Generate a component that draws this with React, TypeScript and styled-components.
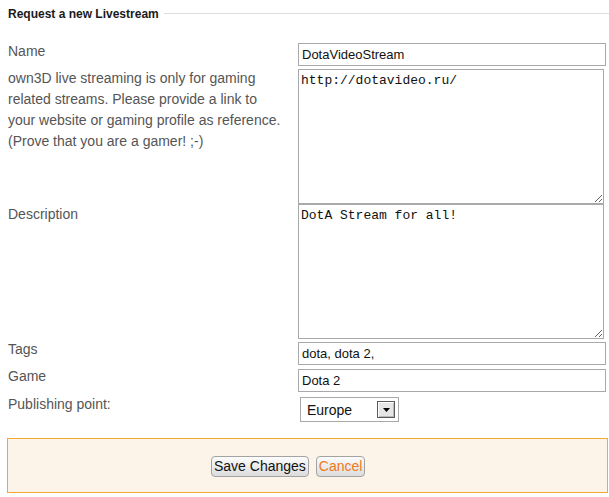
import styled, { createGlobalStyle } from "styled-components";

const GlobalStyle = createGlobalStyle`
  body {
    margin: 0;
    background: #ffffff;
    font-family: "Liberation Sans", Arial, sans-serif;
  }
`;

interface Publishing {
  value: string;
  label: string;
}

const publishingPoints: Publishing[] = [
  { value: "eu", label: "Europe" },
  { value: "us", label: "USA" },
  { value: "asia", label: "Asia" },
];

function App() {
  const onSubmit = (e: React.FormEvent) => {
    e.preventDefault();
  };

  return (
    <Page>
      <GlobalStyle />
      <Header>
        <HeaderTitle>Request a new Livestream</HeaderTitle>
        <HeaderLine />
      </Header>
      <Form onSubmit={onSubmit}>
        <Row>
          <Label>Name</Label>
          <TextInput $top={2} defaultValue="DotaVideoStream" />
        </Row>
        <Row $top={2}>
          <Label>
            own3D live streaming is only for gaming related streams. Please
            provide a link to your website or gaming profile as reference.
            (Prove that you are a gamer! ;-)
          </Label>
          <TextArea $top={1} defaultValue="http://dotavideo.ru/" />
        </Row>
        <Row>
          <Label>Description</Label>
          <TextArea defaultValue="DotA Stream for all!" />
        </Row>
        <Row>
          <Label>Tags</Label>
          <TextInput $top={3} defaultValue="dota, dota 2," />
        </Row>
        <Row $top={1}>
          <Label>Game</Label>
          <TextInput $top={3} defaultValue="Dota 2" />
        </Row>
        <Row $top={2}>
          <Label>Publishing point:</Label>
          <SelectBox>
            <Select defaultValue="eu">
              {publishingPoints.map((p) => (
                <option key={p.value} value={p.value}>
                  {p.label}
                </option>
              ))}
            </Select>
            <SelectArrow>
              <svg width="7" height="4" viewBox="0 0 7 4">
                <path d="M0 0h7L3.5 4z" fill="#000" />
              </svg>
            </SelectArrow>
          </SelectBox>
        </Row>
      </Form>
      <ActionBar>
        <Button type="submit">Save Changes</Button>
        <Button type="button" $cancel>
          Cancel
        </Button>
      </ActionBar>
    </Page>
  );
}

const Page = styled.div`
  width: 609px;
  padding-top: 6px;
`;

const Header = styled.div`
  display: flex;
  align-items: center;
  gap: 5px;
  padding-left: 8px;
  height: 16px;
`;

const HeaderTitle = styled.span`
  font-size: 12px;
  font-weight: bold;
  color: #1a1a1a;
  white-space: nowrap;
`;

const HeaderLine = styled.div`
  flex: 1;
  height: 1px;
  margin-top: -1px;
  background: #dddddd;
`;

const Form = styled.form`
  margin-top: 19px;
  padding-left: 8px;
`;

const Row = styled.div<{ $top?: number }>`
  display: grid;
  grid-template-columns: 290px 308px;
  align-items: start;
  margin-top: ${(p) => p.$top ?? 0}px;
`;

const Label = styled.div`
  padding-right: 10px;
  font-size: 14px;
  line-height: 21px;
  color: #555555;
`;

const TextInput = styled.input<{ $top?: number }>`
  box-sizing: border-box;
  width: 308px;
  height: 23px;
  margin: ${(p) => p.$top ?? 0}px 0 0 0;
  padding: 0 3px;
  border: 1px solid #a9a9a9;
  font-family: "Liberation Sans", Arial, sans-serif;
  font-size: 13px;
  color: #111111;
  outline: none;
`;

const TextArea = styled.textarea<{ $top?: number }>`
  box-sizing: border-box;
  display: block;
  width: 306px;
  height: 135px;
  margin: ${(p) => p.$top ?? 0}px 0 0 0;
  padding: 3px 2px;
  border: 1px solid #a9a9a9;
  font-family: "Liberation Mono", "Courier New", monospace;
  font-size: 13px;
  line-height: 15px;
  color: #111111;
  outline: none;
`;

const SelectBox = styled.div`
  box-sizing: border-box;
  display: flex;
  align-items: center;
  width: 99px;
  height: 25px;
  margin: 3px 0 0 2px;
  padding: 0 3px 0 1px;
  border: 1px solid #a9a9a9;
  background: #ffffff;
`;

const Select = styled.select`
  flex: 1;
  min-width: 0;
  appearance: none;
  border: none;
  background: transparent;
  padding: 0 0 0 5px;
  font-family: "Liberation Sans", Arial, sans-serif;
  font-size: 14px;
  color: #111111;
  outline: none;
`;

const SelectArrow = styled.span`
  box-sizing: border-box;
  display: flex;
  align-items: center;
  justify-content: center;
  width: 18px;
  height: 17px;
  border: 1px solid #5a5a5a;
  box-shadow: inset 1px 1px 0 #ffffff, inset -1px -1px 0 #b8b8b8;
  background: #e6e6e6;
`;

const ActionBar = styled.div`
  box-sizing: border-box;
  width: 601px;
  height: 55px;
  margin: 16px 0 0 7px;
  padding: 17px 0 0 203px;
  display: flex;
  align-items: flex-start;
  gap: 7px;
  border: 1px solid #f3a833;
  background: #fcf4e8;
`;

const Button = styled.button<{ $cancel?: boolean }>`
  height: 21px;
  padding: 0 2px;
  border: 1px solid #a3a3a3;
  border-radius: 4px;
  background: linear-gradient(#fcfcfc, #dcdcdc);
  font-family: "Liberation Sans", Arial, sans-serif;
  font-size: 14px;
  line-height: 19px;
  color: ${(p) => (p.$cancel ? "#ee7a22" : "#111111")};
  cursor: pointer;
`;

export default App;
